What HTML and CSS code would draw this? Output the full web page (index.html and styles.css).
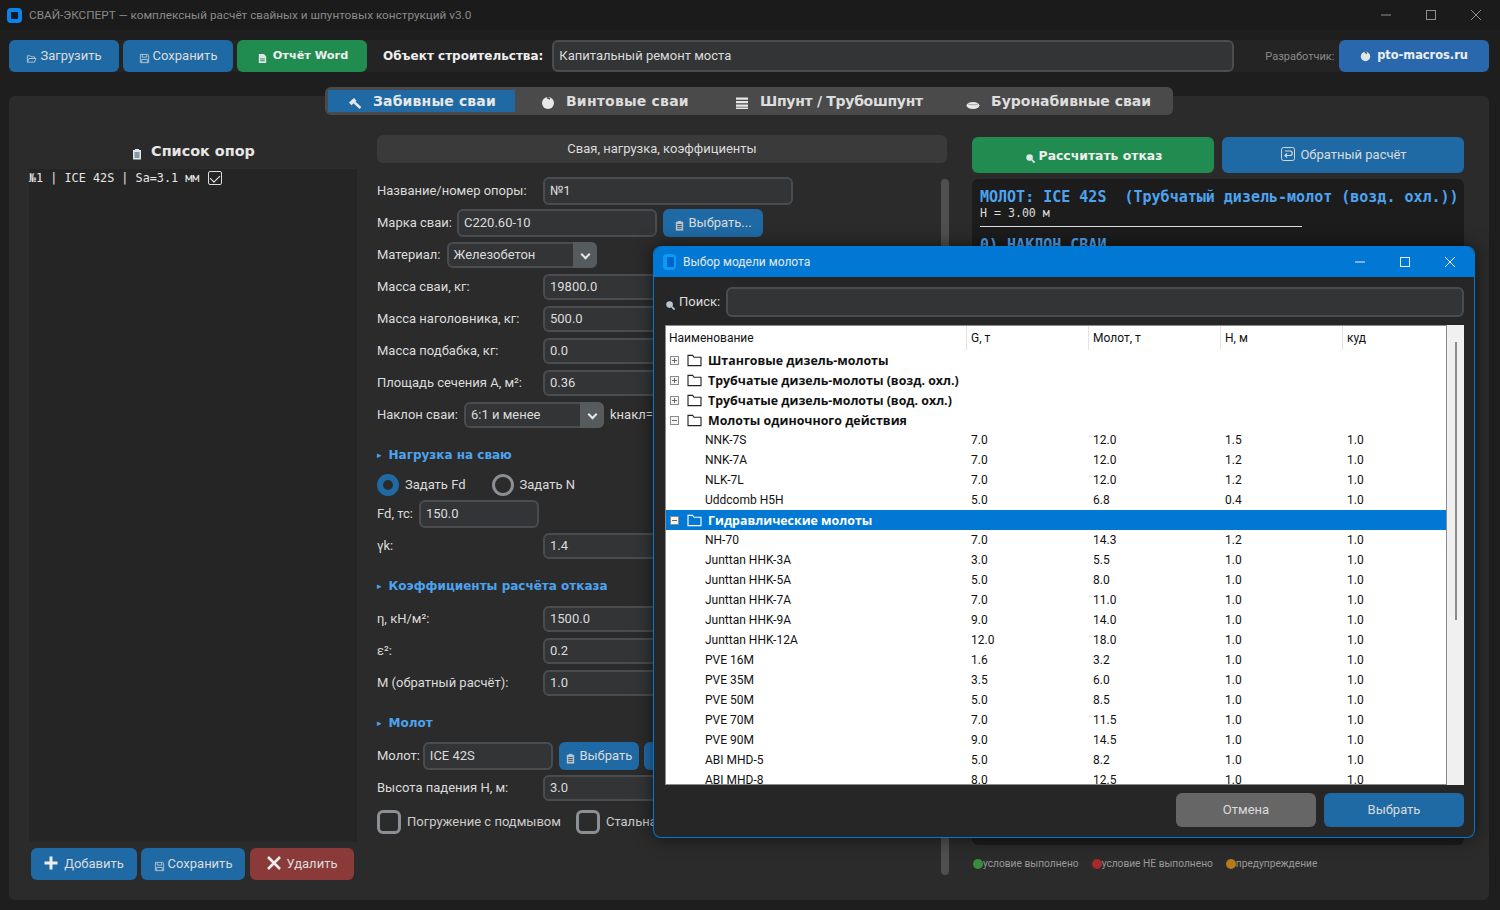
FILE: index.html
```html
<!DOCTYPE html>
<html>
	<head>
		<meta charset="UTF-8">
		<title>СВАЙ-ЭКСПЕРТ</title>
		<link rel="stylesheet" href="styles.css">
	</head>
	<body>
		<svg class="defs" width="0" height="0">
			<symbol id="i-open" viewBox="0 0 12 12"><path d="M1.5 10V3h3l1 1.2h4V6M1.5 10h7.8l1.5-4H3.2z" fill="none" stroke="currentColor"/></symbol>
			<symbol id="i-save" viewBox="0 0 12 12"><path d="M1.5 1.5h8l1 1v8h-9zM3.5 1.5v3h5v-3M3 10.5V7h6v3.5" fill="none" stroke="currentColor"/></symbol>
			<symbol id="i-doc" viewBox="0 0 12 12"><path d="M2 1h5.5L10 3.5V11H2z" fill="currentColor"/><path d="M3.5 6.5h5M3.5 8.5h5" stroke="#218c4f"/></symbol>
			<symbol id="i-clip" viewBox="0 0 12 12"><path d="M2 2h8v9.500H2z" fill="currentColor"/><path d="M4 1h4v2H4z" fill="currentColor"/><path d="M3.500 5h5M3.500 7h5M3.500 9h5" stroke="#2a4a63"/></symbol>
			<symbol id="i-search" viewBox="0 0 12 12"><circle cx="5" cy="5" r="3.600" fill="currentColor"/><path d="M7.500 7.500l3 3" stroke="currentColor" stroke-width="2"/></symbol>
			<symbol id="i-hammer" viewBox="0 0 14 14"><path d="M1 6.500L6 2l2.500 2.700-5 4.500z" fill="currentColor"/><path d="M6.500 6.500l6 5.500" stroke="currentColor" stroke-width="2.400"/></symbol>
			<symbol id="i-screw" viewBox="0 0 14 14"><circle cx="7" cy="7" r="6" fill="currentColor"/><path d="M6 1.500l3 1.500" stroke="#4a4a4a" stroke-width="1.500"/></symbol>
			<symbol id="i-stack" viewBox="0 0 14 14"><path d="M1 1.500h12v2.300H1zM1 5h12v2.300H1zM1 8.500h12v2.300H1zM1 11.500h12V13H1z" fill="currentColor"/></symbol>
			<symbol id="i-bore" viewBox="0 0 14 14"><ellipse cx="7" cy="9.500" rx="6.500" ry="3.500" fill="currentColor"/><path d="M2 8c2 1 8 1 10 0" stroke="#8a8a8a" fill="none" stroke-width=".7"/></symbol>
			<symbol id="i-back" viewBox="0 0 14 14"><rect x=".5" y=".5" width="13" height="13" rx="2" fill="none" stroke="currentColor"/><path d="M4 4h5a2 2 0 0 1 0 4.500H4M6 6.500L4 8.500l2 2" fill="none" stroke="currentColor" stroke-width="1.200"/></symbol>
			<symbol id="i-plus" viewBox="0 0 14 14"><path d="M7 .5v13M.5 7h13" stroke="currentColor" stroke-width="3"/></symbol>
			<symbol id="i-cross" viewBox="0 0 14 14"><path d="M1 1l12 12M13 1L1 13" stroke="currentColor" stroke-width="2.600"/></symbol>
			<symbol id="i-folder" viewBox="0 0 16 14"><path d="M1 12.500V1.500h5l1.500 2H15v9z" stroke="currentColor" stroke-width="1.200"/></symbol>
			<symbol id="i-min" viewBox="0 0 10 10"><path d="M0 5h10" stroke="currentColor"/></symbol>
			<symbol id="i-max" viewBox="0 0 10 10"><rect x=".5" y=".5" width="9" height="9" fill="none" stroke="currentColor"/></symbol>
			<symbol id="i-close" viewBox="0 0 10 10"><path d="M0 0l10 10M10 0L0 10" stroke="currentColor"/></symbol>
		</svg>

		<div class="app">
			<div class="titlebar">
				<div class="logo"></div>
				<span class="title-text">СВАЙ-ЭКСПЕРТ — комплексный расчёт свайных и шпунтовых конструкций v3.0</span>
				<div class="win-btns">
					<svg><use href="#i-min"/></svg>
					<svg><use href="#i-max"/></svg>
					<svg><use href="#i-close"/></svg>
				</div>
			</div>

			<div class="toolbar">
				<button class="btn blue w110"><svg class="ico"><use href="#i-open"/></svg>Загрузить</button>
				<button class="btn blue w110"><svg class="ico"><use href="#i-save"/></svg>Сохранить</button>
				<button class="btn green w130 heavy"><svg class="ico"><use href="#i-doc"/></svg>Отчёт Word</button>
				<label class="obj-label heavy">Объект строительства:</label>
				<input class="field obj-input" value="Капитальный ремонт моста">
				<span class="dev-label">Разработчик:</span>
				<button class="btn site heavy"><svg class="ico"><use href="#i-screw"/></svg>pto-macros.ru</button>
			</div>

			<div class="tabs">
				<div class="tab active"><svg class="tab-ico"><use href="#i-hammer"/></svg>Забивные сваи</div>
				<div class="tab t-screw"><svg class="tab-ico"><use href="#i-screw"/></svg>Винтовые сваи</div>
				<div class="tab t-sheet"><svg class="tab-ico"><use href="#i-stack"/></svg>Шпунт / Трубошпунт</div>
				<div class="tab"><svg class="tab-ico"><use href="#i-bore"/></svg>Буронабивные сваи</div>
			</div>

			<div class="panel">
				<div class="left-col">
					<div class="list-title heavy"><svg class="ico"><use href="#i-clip"/></svg>Список опор</div>
					<div class="list">
						<div class="list-item">№1 | ICE 42S | Sa=3.1 мм <span class="mark"></span></div>
					</div>
					<div class="list-btns">
						<button class="btn blue w106"><svg class="glyph"><use href="#i-plus"/></svg>Добавить</button>
						<button class="btn blue w104"><svg class="ico"><use href="#i-save"/></svg>Сохранить</button>
						<button class="btn red w104"><svg class="glyph"><use href="#i-cross"/></svg>Удалить</button>
					</div>
				</div>

				<div class="mid-col">
					<div class="group-head">Свая, нагрузка, коэффициенты</div>
					<div class="scroll-wrap">
						<div class="form">
							<div class="row"><label class="lbl">Название/номер опоры:</label><input class="field w250" value="№1"></div>
							<div class="row"><label class="tight">Марка сваи:</label><input class="field w200" value="С220.60-10"><button class="btn blue pick"><svg class="ico"><use href="#i-clip"/></svg>Выбрать...</button></div>
							<div class="row"><label>Материал:</label><div class="combo w150"><span>Железобетон</span><i class="arrow"></i></div></div>
							<div class="row"><label class="lbl">Масса сваи, кг:</label><input class="field w250 thin" value="19800.0"></div>
							<div class="row"><label class="lbl">Масса наголовника, кг:</label><input class="field w250 thin" value="500.0"></div>
							<div class="row"><label class="lbl">Масса подбабка, кг:</label><input class="field w250 thin" value="0.0"></div>
							<div class="row"><label class="lbl">Площадь сечения A, м²:</label><input class="field w250 thin" value="0.36"></div>
							<div class="row"><label>Наклон сваи:</label><div class="combo w140"><span>6:1 и менее</span><i class="arrow"></i></div><span class="knakl">kнакл=1.0</span></div>

							<div class="sec heavy"><span class="tri">▸</span>Нагрузка на сваю</div>
							<div class="row radios">
								<span class="radio on"></span><span>Задать Fd</span>
								<span class="radio second"></span><span>Задать N</span>
							</div>
							<div class="row"><label>Fd, тс:</label><input class="field w120" value="150.0"></div>
							<div class="row"><label class="lbl">γk:</label><input class="field w250 thin" value="1.4"></div>

							<div class="sec heavy"><span class="tri">▸</span>Коэффициенты расчёта отказа</div>
							<div class="row"><label class="lbl">η, кН/м²:</label><input class="field w250 thin" value="1500.0"></div>
							<div class="row"><label class="lbl">ε²:</label><input class="field w250 thin" value="0.2"></div>
							<div class="row"><label class="lbl">М (обратный расчёт):</label><input class="field w250 thin" value="1.0"></div>

							<div class="sec heavy"><span class="tri">▸</span>Молот</div>
							<div class="row"><label class="tighter">Молот:</label><input class="field w130i" value="ICE 42S"><button class="btn blue pick-h"><svg class="ico"><use href="#i-clip"/></svg>Выбрать</button><button class="btn blue pick-h"></button></div>
							<div class="row"><label class="lbl">Высота падения H, м:</label><input class="field w250 thin" value="3.0"></div>
							<div class="row checks">
								<span class="check"></span><span>Погружение с подмывом</span>
								<span class="check second"></span><span>Стальная свая</span>
							</div>
						</div>
						<div class="vbar"></div>
					</div>
				</div>

				<div class="right-col">
					<div class="run-btns">
						<button class="btn green run heavy"><svg class="ico"><use href="#i-search"/></svg>Рассчитать отказ</button>
						<button class="btn blue run back"><svg class="back-ico"><use href="#i-back"/></svg>Обратный расчёт</button>
					</div>
					<div class="output">
						<div class="out-h">МОЛОТ: ICE 42S  (Трубчатый дизель-молот (возд. охл.))</div>
						<div class="out-t">H = 3.00 м</div>
						<div class="out-line"></div>
						<div class="out-h">0) НАКЛОН СВАИ</div>
					</div>
					<div class="legend">
						<span class="dot d-green"></span><span class="leg-txt">условие выполнено</span>
						<span class="dot d-red"></span><span class="leg-txt">условие НЕ выполнено</span>
						<span class="dot d-orange"></span><span class="leg-txt">предупреждение</span>
					</div>
				</div>
			</div>
		</div>

		<div class="dialog">
			<div class="dlg-title">
				<div class="dlg-logo"></div>
				<span>Выбор модели молота</span>
				<div class="win-btns dlg-btns">
					<svg><use href="#i-min"/></svg>
					<svg><use href="#i-max"/></svg>
					<svg><use href="#i-close"/></svg>
				</div>
			</div>
			<div class="dlg-body">
				<div class="search-row">
					<svg class="ico"><use href="#i-search"/></svg>
					<label>Поиск:</label>
					<input class="field search">
				</div>
				<div class="tree">
					<div class="tree-main">
						<div class="thead">
							<div class="tc first">Наименование</div><div class="tc">G, т</div><div class="tc">Молот, т</div><div class="tc">H, м</div><div class="tc">куд</div>
						</div>
						<div class="tgroup"><span class="exp plus"></span><svg class="folder"><use href="#i-folder"/></svg>Штанговые дизель-молоты</div>
						<div class="tgroup"><span class="exp plus"></span><svg class="folder"><use href="#i-folder"/></svg>Трубчатые дизель-молоты (возд. охл.)</div>
						<div class="tgroup"><span class="exp plus"></span><svg class="folder"><use href="#i-folder"/></svg>Трубчатые дизель-молоты (вод. охл.)</div>
						<div class="tgroup"><span class="exp"></span><svg class="folder"><use href="#i-folder"/></svg>Молоты одиночного действия</div>
						<div class="trow"><span>NNK-7S</span><span>7.0</span><span>12.0</span><span>1.5</span><span>1.0</span></div>
						<div class="trow"><span>NNK-7A</span><span>7.0</span><span>12.0</span><span>1.2</span><span>1.0</span></div>
						<div class="trow"><span>NLK-7L</span><span>7.0</span><span>12.0</span><span>1.2</span><span>1.0</span></div>
						<div class="trow"><span>Uddcomb H5H</span><span>5.0</span><span>6.8</span><span>0.4</span><span>1.0</span></div>
						<div class="tgroup sel"><span class="exp"></span><svg class="folder"><use href="#i-folder"/></svg>Гидравлические молоты</div>
						<div class="trow"><span>NH-70</span><span>7.0</span><span>14.3</span><span>1.2</span><span>1.0</span></div>
						<div class="trow"><span>Junttan HHK-3A</span><span>3.0</span><span>5.5</span><span>1.0</span><span>1.0</span></div>
						<div class="trow"><span>Junttan HHK-5A</span><span>5.0</span><span>8.0</span><span>1.0</span><span>1.0</span></div>
						<div class="trow"><span>Junttan HHK-7A</span><span>7.0</span><span>11.0</span><span>1.0</span><span>1.0</span></div>
						<div class="trow"><span>Junttan HHK-9A</span><span>9.0</span><span>14.0</span><span>1.0</span><span>1.0</span></div>
						<div class="trow"><span>Junttan HHK-12A</span><span>12.0</span><span>18.0</span><span>1.0</span><span>1.0</span></div>
						<div class="trow"><span>PVE 16M</span><span>1.6</span><span>3.2</span><span>1.0</span><span>1.0</span></div>
						<div class="trow"><span>PVE 35M</span><span>3.5</span><span>6.0</span><span>1.0</span><span>1.0</span></div>
						<div class="trow"><span>PVE 50M</span><span>5.0</span><span>8.5</span><span>1.0</span><span>1.0</span></div>
						<div class="trow"><span>PVE 70M</span><span>7.0</span><span>11.5</span><span>1.0</span><span>1.0</span></div>
						<div class="trow"><span>PVE 90M</span><span>9.0</span><span>14.5</span><span>1.0</span><span>1.0</span></div>
						<div class="trow"><span>ABI MHD-5</span><span>5.0</span><span>8.2</span><span>1.0</span><span>1.0</span></div>
						<div class="trow"><span>ABI MHD-8</span><span>8.0</span><span>12.5</span><span>1.0</span><span>1.0</span></div>
					</div>
					<div class="tree-bar"><div class="tree-thumb"></div></div>
				</div>
				<div class="dlg-btns-row">
					<button class="btn grey dlg-btn">Отмена</button>
					<button class="btn blue dlg-btn">Выбрать</button>
				</div>
			</div>
		</div>
	</body>
</html>
```

FILE: styles.css
```css
* {
	box-sizing: border-box;
}
html, body {
	margin: 0;
	padding: 0;
	height: 100%;
	overflow: hidden;
}
body {
	background: #1e1e1e;
	color: #dcdcdc;
	font: 13px Roboto, "Noto Sans", sans-serif;
}
.defs {
	position: absolute;
}
.heavy {
	font-family: "DejaVu Sans", sans-serif;
	font-weight: 700;
	font-size: 12px;
}

/* window title */
.titlebar {
	height: 30px;
	display: flex;
	align-items: center;
	padding-left: 7px;
	background: #1b1b1b;
}
.logo {
	width: 15px;
	height: 15px;
	border: 4px solid #0a84e8;
	border-radius: 4px;
	background: #0e1a26;
}
.title-text {
	margin-left: 7px;
	font-size: 11.750px;
	color: #8a8a8a;
}
.win-btns {
	margin-left: auto;
	display: flex;
	gap: 35px;
	padding-right: 19px;
	color: #8f8f8f;
}
.win-btns svg {
	width: 10px;
	height: 10px;
}

/* toolbar */
.toolbar {
	height: 32px;
	margin: 10px 11px 0 9px;
	display: flex;
	align-items: center;
	background: #242424;
}
.btn {
	border: 0;
	border-radius: 6px;
	height: 32px;
	padding: 0 0 2px;
	color: #dcdcdc;
	font-family: Roboto, sans-serif;
	font-size: 13px;
	display: inline-flex;
	align-items: center;
	justify-content: center;
	flex: none;
}
.btn.heavy {
	font-family: "DejaVu Sans", sans-serif;
	font-size: 12px;
	color: #eee;
}
.blue { background: #1f6aa5; }
.green { background: #218c4f; }
.red { background: #8b3a3a; }
.grey { background: #666; }
.w110 { width: 110px; margin-right: 4px; }
.w130 { width: 130px; }
.btn.w130.heavy {
	font-size: 11.300px;
	gap: 2px;
	padding-left: 1px;
}
.ico {
	width: 11px;
	height: 11px;
	margin-right: 3px;
	margin-top: 6px;
	flex: none;
	color: #b9c6d0;
}
.green .ico, .site .ico, .list-title .ico {
	color: #dfe6ea;
}
.obj-label {
	margin-left: 16px;
	color: #eee;
}
.field {
	height: 26px;
	border: 2px solid #4a4d50;
	border-radius: 6px;
	background: #323436;
	color: #dcdcdc;
	font: 13px Roboto, sans-serif;
	padding: 0 5px 2px;
	outline: 0;
	flex: none;
}
.obj-input {
	width: 682px;
	height: 32px;
	margin-left: 9px;
}
.dev-label {
	margin-left: 31px;
	font-size: 11px;
	color: #8a8a8a;
}
.site {
	width: 150px;
	margin-left: auto;
	background: #2a68ad;
}
.btn.site {
	font-size: 11.400px;
	gap: 3px;
}
.site .ico {
	margin-top: 2px;
}

/* tabs */
.tabs {
	width: 848px;
	height: 28px;
	margin: 15px 0 -19px 325px;
	padding: 3px;
	display: flex;
	position: relative;
	background: #4a4a4a;
	border-radius: 6px;
	font: 700 14px "DejaVu Sans", sans-serif;
	color: #ddd;
}
.tab {
	height: 22px;
	display: flex;
	align-items: center;
	padding: 0 0 0 26px;
	white-space: nowrap;
}
.tab.active {
	width: 187px;
	padding-left: 20px;
	background: #1f6aa5;
	color: #e8e8e8;
	letter-spacing: .15px;
}
.t-screw {
	width: 194px;
	letter-spacing: .2px;
}
.t-sheet {
	width: 231px;
	letter-spacing: -.3px;
}
.tab-ico {
	width: 14px;
	height: 14px;
	margin-right: 11px;
	margin-top: 4px;
	color: #e8e8e8;
	flex: none;
}

/* main panel */
.panel {
	height: 804px;
	margin: 0 11px 0 9px;
	padding: 39px 25px 20px 20px;
	background: #2b2b2b;
	border-radius: 6px;
	display: flex;
}
.left-col {
	width: 328px;
	margin-right: 20px;
	display: flex;
	flex-direction: column;
}
.list-title {
	height: 34px;
	padding-bottom: 2px;
	display: flex;
	align-items: center;
	justify-content: center;
	font-size: 14.400px;
	color: #e6e6e6;
}
.list-title .ico {
	width: 12px;
	height: 12px;
	margin-right: 8px;
}
.list {
	height: 673px;
	background: #252525;
}
.list-item {
	font: 11.800px "DejaVu Sans Mono", monospace;
	color: #e6e6e6;
	padding-top: 2px;
	display: flex;
	align-items: center;
	white-space: pre;
}
.mark {
	width: 14px;
	height: 14px;
	margin-left: 1px;
	border: 1px solid #ddd;
	border-radius: 2px;
	position: relative;
}
.mark::after {
	content: "";
	position: absolute;
	left: 3px;
	top: 1px;
	width: 5px;
	height: 8px;
	border: solid #eee;
	border-width: 0 1.500px 1.500px 0;
	transform: rotate(45deg);
}
.list-btns {
	margin-top: 6px;
	padding-left: 2px;
	display: flex;
	gap: 4px;
}
.list-btns .red {
	margin-left: 1px;
}
.w106 { width: 106px; }
.w104 { width: 104px; }
.glyph {
	width: 14px;
	height: 14px;
	margin-right: 6px;
	color: #eee;
	flex: none;
}

/* middle column */
.mid-col {
	width: 570px;
	margin-right: 25px;
	display: flex;
	flex-direction: column;
}
.group-head {
	height: 28px;
	line-height: 27px;
	text-align: center;
	background: #3a3a3a;
	border-radius: 6px;
	font-size: 13px;
}
.scroll-wrap {
	flex: 1;
	display: flex;
	position: relative;
	margin-top: 14px;
}
.form {
	flex: 1;
	display: flex;
	flex-direction: column;
	gap: 4px;
}
.row {
	height: 28px;
	display: flex;
	align-items: center;
	flex: none;
}
.row > span {
	padding-bottom: 2px;
}
.row label {
	margin-right: 6px;
	padding-bottom: 2px;
	white-space: nowrap;
}
.row .lbl {
	width: 160px;
}
.row .tight { margin-right: 5px; }
.row .tighter { margin-right: 3px; }
.w250 { width: 250px; height: 28px; }
.thin { height: 26px; }
.w200 { width: 200px; height: 28px; }
.w120 { width: 120px; height: 28px; }
.w130i { width: 130px; height: 28px; }
.pick {
	width: 100px;
	height: 28px;
	margin-left: 6px;
}
.pick-h {
	width: 80px;
	height: 28px;
	margin-left: 6px;
}
.pick-h + .pick-h {
	margin-left: 5px;
}
.combo {
	height: 26px;
	display: flex;
	border: 2px solid #4a4d50;
	border-radius: 6px;
	background: #323436;
	padding-left: 5px;
	align-items: center;
	justify-content: space-between;
}
.combo span {
	padding-bottom: 2px;
}
.w150 { width: 150px; }
.w140 { width: 140px; }
.arrow {
	width: 24px;
	height: 26px;
	margin-right: -2px;
	background: #565b5e;
	border-radius: 0 6px 6px 0;
	position: relative;
}
.arrow::after {
	content: "";
	position: absolute;
	left: 9px;
	top: 9px;
	width: 5px;
	height: 5px;
	border: solid #e8e8e8;
	border-width: 0 2px 2px 0;
	transform: rotate(45deg);
}
.knakl {
	margin-left: 6px;
}
.sec {
	height: 28px;
	margin: 7px 0 2px;
	padding-top: 2px;
	display: flex;
	align-items: center;
	font-size: 12px;
	color: #4da3ef;
}
.tri {
	font-size: 9px;
	margin-right: 7px;
}
.radios {
	height: 22px;
}
.row > .radio, .row > .check {
	padding: 0;
}
.radio {
	width: 22px;
	height: 22px;
	border: 3px solid #8c9094;
	border-radius: 50%;
	margin-right: 6px;
}
.radio.on {
	border: 6px solid #1f6aa5;
	background: #2b2b2b;
}
.radio.second {
	margin-left: 26px;
}
.checks {
	margin-top: 2px;
	color: #ccc;
}
.check {
	width: 24px;
	height: 24px;
	border: 3px solid #8c9094;
	border-radius: 6px;
	margin-right: 6px;
}
.check.second {
	margin-left: 15px;
}
.vbar {
	position: absolute;
	right: -2px;
	top: 2px;
	width: 8px;
	height: 696px;
	background: #4f4f4f;
	border-radius: 4px;
}

/* right column */
.right-col {
	width: 492px;
	display: flex;
	flex-direction: column;
	padding-top: 2px;
}
.run-btns {
	display: flex;
	gap: 8px;
}
.run {
	width: 242px;
	height: 36px;
}
.btn.run.heavy {
	font-size: 12.400px;
	padding: 0 0 0 1px;
}
.btn.back {
	padding-left: 2px;
}
.back-ico {
	width: 14px;
	height: 14px;
	margin-right: 5px;
	color: #d0d8de;
}
.output {
	height: 666px;
	margin-top: 6px;
	padding: 8px;
	background: #1c1c1c;
	border-radius: 6px;
	font-family: "DejaVu Sans Mono", monospace;
}
.out-h {
	font-size: 15px;
	line-height: 20px;
	font-weight: 700;
	color: #4da3ef;
	white-space: pre;
}
.out-t {
	font-size: 11.600px;
	line-height: 13px;
	color: #dcdcdc;
}
.out-line {
	width: 322px;
	height: 1px;
	margin: 6px 0 8px;
	background: #ddd;
}
.legend {
	margin-top: 13px;
	padding-left: 1px;
	display: flex;
	align-items: center;
	font-size: 10.200px;
	color: #999;
}
.dot {
	width: 10px;
	height: 10px;
	border-radius: 50%;
}
.d-green { background: #388e3c; }
.d-red { background: #a52a2a; }
.d-orange { background: #b8791a; }
.leg-txt {
	margin-right: 13px;
}

/* hammer dialog */
.dialog {
	position: absolute;
	left: 653px;
	top: 246px;
	width: 822px;
	height: 592px;
	display: flex;
	flex-direction: column;
	background: #262626;
	border: 1px solid #0078d4;
	border-top: 0;
	border-radius: 8px;
	box-shadow: 0 0 18px rgba(0, 0, 0, .55);
}
.dlg-title {
	height: 31px;
	display: flex;
	align-items: center;
	padding-left: 9px;
	background: #0078d4;
	border-radius: 8px 8px 0 0;
	font-size: 12px;
	color: #e8e8e8;
}
.dlg-logo {
	width: 13px;
	height: 16px;
	margin-right: 7px;
	border: solid #0a9cf5;
	border-width: 3px 2px 3px 4px;
	border-radius: 4px;
	background: #0064c8;
}
.dlg-btns {
	padding-right: 19px;
	color: #eef;
}
.dlg-body {
	flex: 1;
	padding: 10px 10px 10px 11px;
	display: flex;
	flex-direction: column;
}
.search-row {
	display: flex;
	align-items: center;
	height: 30px;
}
.search-row label {
	margin-right: 6px;
	padding-bottom: 2px;
}
.search {
	flex: 1;
	height: 30px;
}
.tree {
	height: 460px;
	margin-top: 8px;
	display: flex;
	overflow: hidden;
}
.tree-main {
	width: 782px;
	background: #fff;
	border: 1px solid #8b8b8b;
	color: #111;
	font-size: 12px;
	overflow: hidden;
}
.thead, .trow {
	display: grid;
	grid-template-columns: 300px 122px 132px 122px 1fr;
}
.thead {
	height: 24px;
	align-items: center;
}
.tc {
	height: 24px;
	line-height: 24px;
	padding-left: 4px;
	border-left: 1px solid #e2e2e2;
}
.tc.first {
	padding-left: 3px;
	border-left: 0;
}
.trow {
	height: 20px;
	line-height: 20px;
}
.trow span {
	padding-left: 5px;
}
.trow span:first-child {
	padding-left: 39px;
}
.tgroup {
	height: 20px;
	display: flex;
	align-items: center;
	font: 700 12.400px "Open Sans", sans-serif;
	color: #111;
}
.tgroup.sel {
	background: #0078d4;
	color: #fff;
}
.exp {
	width: 9px;
	height: 9px;
	margin-left: 4px;
	margin-right: 8px;
	border: 1px solid #8b8b8b;
	background: linear-gradient(#666, #666) center / 5px 1px no-repeat, #f4f4f4;
	flex: none;
}
.exp.plus {
	background: linear-gradient(#666, #666) center / 5px 1px no-repeat, linear-gradient(#666, #666) center / 1px 5px no-repeat, #f4f4f4;
}
.folder {
	width: 15px;
	height: 13px;
	margin-right: 6px;
	color: #222;
	fill: #fff;
	flex: none;
}
.sel .folder {
	color: #fff;
	fill: none;
}
.tree-bar {
	flex: 1;
	background: #f0f0f0;
	position: relative;
}
.tree-thumb {
	position: absolute;
	left: 8px;
	top: 17px;
	width: 2px;
	height: 278px;
	background: #8a8a8a;
}
.dlg-btns-row {
	margin-top: 8px;
	display: flex;
	justify-content: flex-end;
	gap: 8px;
}
.dlg-btn {
	width: 140px;
	height: 34px;
}
```
